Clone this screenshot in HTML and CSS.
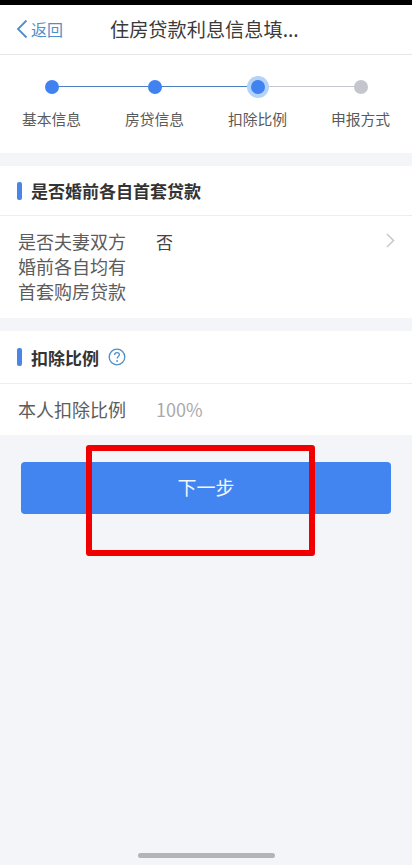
FILE: index.html
```html
<!DOCTYPE html>
<html lang="zh-CN">
<head>
  <meta charset="UTF-8" />
  <meta name="viewport" content="width=device-width, initial-scale=1.0"/>
  <title>住房贷款利息信息填写</title>
  <link rel="stylesheet" href="styles.css">
</head>
<body>

  <div class="page">
    <div class="status"></div>

    <div class="nav">
      <a class="back">
        <svg width="12" height="20" viewBox="0 0 12 20"><path d="M10.5 1.5 L2 10 L10.5 18.5" fill="none" stroke="#4f8fc9" stroke-width="1.8"/></svg>
        <span>返回</span>
      </a>
      <div class="nav-title">住房贷款利息信息填...</div>
    </div>

    <div class="steps">
      <div class="step done"><span class="dot"></span><span class="step-label">基本信息</span></div>
      <div class="step done"><span class="dot"></span><span class="step-label">房贷信息</span></div>
      <div class="step current"><span class="dot"></span><span class="step-label">扣除比例</span></div>
      <div class="step"><span class="dot"></span><span class="step-label">申报方式</span></div>
    </div>

    <div class="section">
      <div class="section-head">
        <span class="mark"></span>
        <h3>是否婚前各自首套贷款</h3>
      </div>
      <div class="row row-tall">
        <div class="row-label">是否夫妻双方婚前各自均有首套购房贷款</div>
        <div class="row-value">否</div>
        <svg class="chevron" width="9" height="15" viewBox="0 0 9 15"><path d="M1 1 L7.5 7.5 L1 14" fill="none" stroke="#c8c8cc" stroke-width="1.5"/></svg>
      </div>
    </div>

    <div class="section">
      <div class="section-head head-tall">
        <span class="mark"></span>
        <h3>扣除比例</h3>
        <svg class="help" width="18" height="18" viewBox="0 0 18 18">
          <circle cx="9" cy="9" r="7.8" fill="none" stroke="#4f8fc9" stroke-width="1.3"/>
          <path d="M6.6 7 C6.6 5.5 7.7 4.7 9 4.7 C10.4 4.7 11.4 5.6 11.4 6.8 C11.4 8.4 9.1 8.6 9.1 10.6" fill="none" stroke="#4f8fc9" stroke-width="1.3"/>
          <circle cx="9.1" cy="13" r="0.9" fill="#4f8fc9"/>
        </svg>
      </div>
      <div class="row row-short">
        <div class="row-label">本人扣除比例</div>
        <div class="row-value muted">100%</div>
      </div>
    </div>

    <div class="action">
      <button class="btn">下一步</button>
      <div class="highlight"></div>
    </div>

    <div class="home-bar"></div>
  </div>

</body>
</html>
```
FILE: styles.css
```css
* {
  box-sizing: border-box;
}

body {
  margin: 0;
  font-family: "Noto Sans CJK SC", "Noto Sans", sans-serif;
  background: #f4f5f9;
  color: #333;
}

.page {
  height: 865px;
  display: flex;
  flex-direction: column;
  overflow: hidden;
}

.status {
  height: 5px;
  background: #000;
}

.nav {
  height: 50px;
  background: #fff;
  border-bottom: 1px solid #e6e6e8;
  display: flex;
  align-items: center;
  padding-left: 16px;
  padding-bottom: 1px;
}

.back {
  display: flex;
  align-items: center;
  gap: 3px;
  width: 94px;
  color: #4f8fc9;
  font-size: 16px;
}

.nav-title {
  font-size: 19.2px;
  color: #3a3a3a;
  white-space: nowrap;
}

.steps {
  height: 98px;
  background: #fff;
  display: flex;
}

.step {
  width: 103px;
  position: relative;
  display: flex;
  flex-direction: column;
  align-items: center;
  padding-top: 25px;
}

/* line going to the next step */
.step::after {
  content: "";
  position: absolute;
  top: 31px;
  left: 51px;
  width: 103px;
  height: 1px;
  background: #c6c6cc;
}

.step:last-child::after {
  display: none;
}

.step.done::after {
  background: #4a7fc0;
}

.dot {
  width: 14px;
  height: 14px;
  border-radius: 50%;
  background: #c5c5ce;
  position: relative;
  z-index: 1;
}

.step.done .dot,
.step.current .dot {
  background: #3f82f0;
}

.step.current .dot {
  box-shadow: 0 0 0 4px #b5d3f7;
}

.step-label {
  margin-top: 14px;
  font-size: 14.8px;
  line-height: 22px;
  color: #5a5a5a;
}

.section {
  background: #fff;
  margin-top: 13px;
}

.section-head {
  height: 50px;
  border-bottom: 1px solid #eeeef0;
  display: flex;
  align-items: center;
  padding-left: 17px;
}

.head-tall {
  height: 53px;
}

.mark {
  width: 5px;
  height: 18px;
  border-radius: 2px;
  background: #4a86e8;
  margin-right: 9px;
}

.section-head h3 {
  margin: 0;
  font-size: 17px;
  font-weight: bold;
  color: #333;
}

.help {
  margin-left: 9px;
}

.row {
  display: flex;
  align-items: flex-start;
  padding: 13px 18px 0;
  position: relative;
}

.row-tall {
  height: 102px;
}

.row-short {
  height: 51px;
}

.row-label {
  width: 110px;
  margin-right: 28px;
  font-size: 18px;
  line-height: 25px;
  color: #5c5c5c;
  flex-shrink: 0;
}

.row-short .row-label {
  white-space: nowrap;
}

.row-value {
  font-size: 17px;
  line-height: 25px;
  color: #444;
}

.row-value.muted {
  font-size: 18px;
  color: #aaa;
}

.chevron {
  position: absolute;
  right: 17px;
  top: 17px;
}

.action {
  position: relative;
  flex: 1;
  padding: 27px 21px 0;
}

.btn {
  display: block;
  width: 370px;
  height: 52px;
  padding-bottom: 4px;
  border: none;
  border-radius: 4px;
  background: #4285f0;
  color: #f2f6fd;
  font-family: inherit;
  font-size: 19px;
}

/* red annotation drawn over the screenshot */
.highlight {
  position: absolute;
  left: 86px;
  top: 10px;
  width: 229px;
  height: 111px;
  border: 6px solid #f00000;
  border-radius: 3px;
}

.home-bar {
  width: 137px;
  height: 5px;
  border-radius: 3px;
  background: #b3b3b8;
  margin: 0 auto 7px 138px;
}
```
